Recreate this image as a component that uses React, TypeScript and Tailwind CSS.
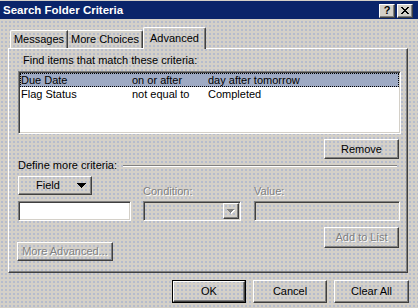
import React from "react";

const raised =
  "border border-t-white border-l-white border-r-[#404040] border-b-[#404040] shadow-[inset_-1px_-1px_#808080]";
const sunken =
  "border border-t-[#808080] border-l-[#808080] border-r-white border-b-white shadow-[inset_1px_1px_#404040,inset_-1px_-1px_#d4d0c8]";
const dis = "text-[#808080] [text-shadow:1px_1px_0_#ffffff]";
const dots =
  "bg-[#d4d0c8] bg-[radial-gradient(circle,#a9b3cf_0.65px,transparent_0.85px)] bg-[length:4px_4px] bg-fixed";

function Btn({
  w,
  h,
  children,
  disabled,
  className = "",
}: {
  w: string;
  h: string;
  children: React.ReactNode;
  disabled?: boolean;
  className?: string;
}) {
  return (
    <div
      className={`${w} ${h} ${raised} flex items-center justify-center shrink-0 ${
        disabled ? dis : ""
      } ${className}`}
    >
      {children}
    </div>
  );
}

export default function App() {
  return (
    <div
      className={`w-[418px] h-[308px] ${dots} font-['Liberation_Sans',Arial,sans-serif] text-[11px] leading-[13px] text-black flex flex-col overflow-hidden`}
    >
      {/* Title bar */}
      <div className="mt-px h-[18px] bg-[#0a246a] flex items-center pl-[3px] pr-[5px]">
        <span className="text-white font-bold text-[11.5px]">Search Folder Criteria</span>
        <div className="ml-auto flex gap-[2px] mt-[1px]">
          <div className={`w-[16px] h-[14px] bg-[#d4d0c8] ${raised} flex items-center justify-center font-bold text-[11px] leading-[11px]`}>
            ?
          </div>
          <div className={`w-[16px] h-[14px] bg-[#d4d0c8] ${raised} flex items-center justify-center`}>
            <svg width="8" height="7" viewBox="0 0 8 7" shapeRendering="crispEdges">
              <path
                d="M0 0h2v1H0zM6 0h2v1H6zM1 1h2v1H1zM5 1h2v1H5zM2 2h4v1H2zM3 3h2v1H3zM2 4h4v1H2zM1 5h2v1H1zM5 5h2v1H5zM0 6h2v1H0zM6 6h2v1H6z"
                fill="#000"
              />
            </svg>
          </div>
        </div>
      </div>

      {/* Tabs */}
      <div className="mt-[8px] h-[21px] flex items-end pl-[10px] relative z-10">
        <div className="w-[58px] h-[18px] border-t border-l border-white border-r border-r-[#404040] shadow-[inset_-1px_0_#808080] rounded-tl-[2px] flex items-center justify-center">
          Messages
        </div>
        <div className="w-[75px] h-[18px] border-t border-white border-r border-r-[#404040] shadow-[inset_-1px_0_#808080] rounded-tr-[2px] flex items-center justify-center">
          More Choices
        </div>
        <div
          className={`w-[63px] h-[22px] -mb-px ${dots} border-t border-l border-white border-r border-r-[#404040] shadow-[inset_-1px_0_#808080] rounded-t-[2px] flex items-start justify-center pt-[4px]`}
        >
          Advanced
        </div>
      </div>

      {/* Panel */}
      <div className="ml-[8px] w-[400px] h-[225px] border border-t-white border-l-white border-r-[#404040] border-b-[#404040] shadow-[inset_-1px_-1px_#808080] flex flex-col">
        <div className="mt-[5px] pl-[14px]">Find items that match these criteria:</div>

        <div className={`mt-[4px] ml-[9px] w-[383px] h-[63px] bg-white ${sunken} p-[1px]`}>
          <div className="h-[14px] bg-[#9eaac4] border border-dotted border-black flex items-center">
            <span className="w-[111px]">Due Date</span>
            <span className="w-[76px]">on or after</span>
            <span>day after tomorrow</span>
          </div>
          <div className="h-[14px] border border-transparent flex items-center">
            <span className="w-[111px]">Flag Status</span>
            <span className="w-[76px]">not equal to</span>
            <span>Completed</span>
          </div>
        </div>

        <Btn w="w-[75px]" h="h-[20px]" className="mt-[5px] ml-[315px]">
          Remove
        </Btn>

        <div className="flex items-center pl-[9px] pr-[10px]">
          <span>Define more criteria:</span>
          <div className="flex-1 ml-[6px] border-t border-t-[#808080] border-b border-b-white" />
        </div>

        <div className="mt-[4px] ml-[9px] flex items-end">
          <div className="w-[113px] flex flex-col">
            <div className={`w-[74px] h-[19px] ${raised} flex items-center pl-[17px] pr-[5px]`}>
              <span>Field</span>
              <svg className="ml-auto" width="9" height="5" viewBox="0 0 9 5" shapeRendering="crispEdges">
                <path d="M0 0h9v1H0zM1 1h7v1H1zM2 2h5v1H2zM3 3h3v1H3zM4 4h1v1H4z" fill="#000" />
              </svg>
            </div>
            <div className={`mt-[6px] h-[20px] bg-white ${sunken}`} />
          </div>

          <div className="ml-[12px] w-[98px] flex flex-col">
            <span className={dis}>Condition:</span>
            <div className={`mt-[3px] h-[20px] ${sunken} flex justify-end items-center pr-[1px]`}>
              <div className={`w-[16px] h-[16px] ${raised} flex items-center justify-center`}>
                <svg width="8" height="5" viewBox="0 0 8 5" shapeRendering="crispEdges">
                  <path d="M1 1h7v1H1zM2 2h5v1H2zM3 3h3v1H3zM4 4h1v1H4z" fill="#fff" />
                  <path d="M0 0h7v1H0zM1 1h5v1H1zM2 2h3v1H2zM3 3h1v1H3z" fill="#808080" />
                </svg>
              </div>
            </div>
          </div>

          <div className="ml-[13px] w-[146px] flex flex-col">
            <span className={dis}>Value:</span>
            <div className={`mt-[3px] h-[20px] ${sunken}`} />
          </div>
        </div>

        <div className="mt-[6px] flex items-start">
          <Btn w="w-[96px]" h="h-[19px]" disabled className="mt-[15px] ml-[8px]">
            More Advanced...
          </Btn>
          <Btn w="w-[75px]" h="h-[21px]" disabled className="ml-[211px]">
            Add to List
          </Btn>
        </div>
      </div>

      {/* Bottom buttons */}
      <div className="mt-[7px] flex justify-end gap-[7px] pr-[9px]">
        <div className="w-[74px] h-[23px] border border-black flex">
          <div className={`flex-1 ${raised} flex items-center justify-center`}>OK</div>
        </div>
        <Btn w="w-[74px]" h="h-[23px]">Cancel</Btn>
        <Btn w="w-[75px]" h="h-[23px]">Clear All</Btn>
      </div>
    </div>
  );
}
